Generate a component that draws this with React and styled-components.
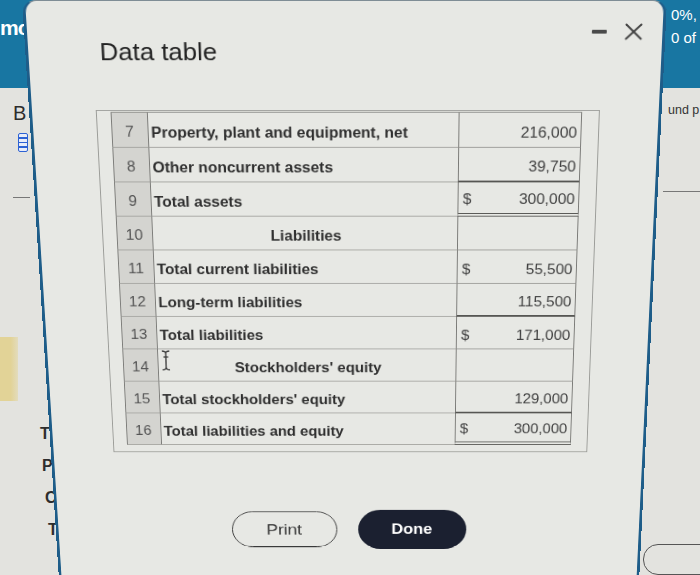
import React from 'react';
import styled, { createGlobalStyle } from 'styled-components';

const GlobalStyle = createGlobalStyle`
  html, body {
    margin: 0;
    padding: 0;
    width: 700px;
    height: 575px;
    overflow: hidden;
  }
  body {
    font-family: "Liberation Sans", Arial, sans-serif;
    background: #e2e2de;
  }
  #root {
    width: 700px;
    height: 575px;
  }
`;

const Screen = styled.div`
  position: relative;
  width: 700px;
  height: 575px;
  overflow: hidden;
  background: #e3e3df;
`;

/* page behind the modal */
const TopBar = styled.div`
  height: 88px;
  background: #1876a2;
  display: flex;
  justify-content: space-between;
  color: #ffffff;
`;

const TopLeftText = styled.div`
  font-size: 21px;
  font-weight: 700;
  padding-top: 16px;
  letter-spacing: -1px;
`;

const TopRightText = styled.div`
  width: 29px;
  padding-top: 3px;
  font-size: 15px;
  line-height: 23px;
  white-space: nowrap;
`;

const Lower = styled.div`
  display: flex;
  justify-content: space-between;
  height: 487px;
`;

const LeftRail = styled.div`
  width: 70px;
  display: flex;
  flex-direction: column;
  align-items: flex-start;
  color: #2d2d2d;
`;

const RailLetter = styled.div`
  font-size: ${p => p.size || 16}px;
  font-weight: ${p => (p.bold ? 700 : 400)};
  line-height: ${p => p.lh || 32}px;
  margin-left: ${p => p.indent}px;
  margin-top: ${p => p.top || 0}px;
`;

const BlueBadge = styled.div`
  width: 8px;
  height: 17px;
  margin: 9px 0 0 18px;
  border: 1.5px solid #2d62d4;
  border-radius: 2px;
  background: repeating-linear-gradient(#e8ecf8 0 3px, #2d62d4 3px 4.5px);
`;

const RailRule = styled.div`
  height: 1px;
  width: ${p => p.width}px;
  margin-left: ${p => p.indent}px;
  margin-top: ${p => p.top}px;
  background: #777;
`;

const YellowBlock = styled.div`
  width: 18px;
  height: 64px;
  margin-top: 139px;
  background: linear-gradient(90deg, #e2d397 60%, #e3dcbd);
`;

const RightRail = styled.div`
  width: 57px;
  display: flex;
  flex-direction: column;
  color: #333;
`;

const RightText = styled.div`
  padding-left: 25px;
  margin-top: 15px;
  font-size: 12.5px;
  white-space: nowrap;
`;

const GhostPill = styled.div`
  margin-top: 352px;
  width: 70px;
  height: 30px;
  border: 1px solid #555;
  border-radius: 15px;
`;

/* modal */
const Dialog = styled.div`
  position: absolute;
  left: 22px;
  top: 0;
  width: 645px;
  height: 690px;
  box-sizing: border-box;
  background: #e7e8e4;
  border: 3px solid #1e5d89;
  border-top: 1px solid #7d8b94;
  border-radius: 14px 14px 0 0;
  transform-origin: 368px 0;
  transform: perspective(1545px) rotateX(-15deg);
  display: flex;
  flex-direction: column;
`;

const Header = styled.div`
  height: 115px;
  box-sizing: border-box;
  display: flex;
  justify-content: space-between;
  align-items: flex-start;
  padding: 22px 20px 0 72px;
`;

const Title = styled.h2`
  margin: 16px 0 0;
  font-size: 26px;
  line-height: 30px;
  font-weight: 400;
  color: #232323;
`;

const Controls = styled.div`
  display: flex;
  align-items: center;
  gap: 18px;
  height: 20px;
`;

const MinimizeBar = styled.div`
  width: 15px;
  height: 4px;
  background: #4a4a4a;
  border-radius: 1px;
`;

const Frame = styled.div`
  margin-left: 65px;
  width: 514px;
  box-sizing: border-box;
  border: 1px solid #9b9c98;
  padding: 1px 17.5px 8px 13.5px;
`;

const Table = styled.div`
  display: flex;
  flex-direction: column;
  border-top: 1px solid #8e8e8a;
`;

const Row = styled.div`
  display: grid;
  grid-template-columns: 38px 317px 126px;
  height: 38px;
`;

const NumCell = styled.div`
  box-sizing: border-box;
  display: flex;
  align-items: flex-end;
  justify-content: center;
  padding-bottom: 7px;
  background: #d4d4d0;
  border-left: 1px solid #7d7d7a;
  border-right: 1px solid #7d7d7a;
  border-bottom: 1px solid #a3a39f;
  font-size: 16px;
  line-height: 18px;
  color: #555;
`;

const LabelCell = styled.div`
  position: relative;
  box-sizing: border-box;
  display: flex;
  align-items: flex-end;
  justify-content: ${p => (p.heading ? 'center' : 'flex-start')};
  padding: 0 0 6px 3px;
  border-bottom: 1px solid #a3a39f;
  font-size: 16px;
  line-height: 18px;
  font-weight: 700;
  color: #2f2f2f;
  white-space: nowrap;
`;

const underline = {
  thin: '1px solid #9a9a96',
  single: '2px solid #565653',
  double: '4px double #565653',
};

const ValueCell = styled.div`
  box-sizing: border-box;
  display: flex;
  align-items: flex-end;
  justify-content: space-between;
  padding: 0 3px 6px 5px;
  border-left: 1px solid #7a7a77;
  border-right: 1px solid #7a7a77;
  border-bottom: ${p => underline[p.line || 'thin']};
  font-size: 16px;
  line-height: 18px;
  color: #414141;
`;

const Cursor = styled.svg`
  position: absolute;
  left: 2px;
  top: 0;
`;

const ButtonRow = styled.div`
  display: flex;
  justify-content: center;
  align-items: center;
  gap: 23px;
  margin-top: 71px;
`;

const PillButton = styled.button`
  box-sizing: border-box;
  width: ${p => (p.primary ? 119 : 116)}px;
  height: ${p => (p.primary ? 49 : 45)}px;
  border-radius: 25px;
  border: ${p => (p.primary ? 'none' : '1.5px solid #3a3a3a')};
  background: ${p => (p.primary ? '#1b2030' : 'transparent')};
  color: ${p => (p.primary ? '#ffffff' : '#333333')};
  font-family: "Liberation Sans", Arial, sans-serif;
  font-size: ${p => (p.primary ? 18 : 19)}px;
  font-weight: ${p => (p.primary ? 700 : 400)};
  padding: 0;
`;

const rows = [
  { n: 7, label: 'Property, plant and equipment, net', value: '216,000' },
  { n: 8, label: 'Other noncurrent assets', value: '39,750', line: 'single' },
  { n: 9, label: 'Total assets', dollar: true, value: '300,000', line: 'double' },
  { n: 10, label: 'Liabilities', heading: true },
  { n: 11, label: 'Total current liabilities', dollar: true, value: '55,500' },
  { n: 12, label: 'Long-term liabilities', value: '115,500', line: 'single' },
  { n: 13, label: 'Total liabilities', dollar: true, value: '171,000' },
  { n: 14, label: "Stockholders' equity", heading: true, cursor: true },
  { n: 15, label: "Total stockholders' equity", value: '129,000', line: 'single' },
  { n: 16, label: 'Total liabilities and equity', dollar: true, value: '300,000', line: 'double' },
];

const TextCursor = () => (
  <Cursor width="12" height="26" viewBox="0 0 12 26" fill="none" stroke="#3a3a3a" strokeWidth="1.4">
    <path d="M2 2 Q6 2 6 5 Q6 2 10 2" />
    <path d="M6 5 V21" />
    <path d="M3.5 9 H8.5" />
    <path d="M2 24 Q6 24 6 21 Q6 24 10 24" />
  </Cursor>
);

export default function App() {
  return (
    <Screen>
      <GlobalStyle />
      <TopBar>
        <TopLeftText>mc</TopLeftText>
        <TopRightText>
          0%,
          <br />0 of
        </TopRightText>
      </TopBar>
      <Lower>
        <LeftRail>
          <RailLetter indent={13} top={14} size={20} lh={22}>B</RailLetter>
          <BlueBadge />
          <RailRule indent={13} top={45} width={17} />
          <YellowBlock />
          <RailLetter indent={40} top={17} bold>T</RailLetter>
          <RailLetter indent={42} bold>P</RailLetter>
          <RailLetter indent={45} bold>C</RailLetter>
          <RailLetter indent={48} bold>T</RailLetter>
        </LeftRail>
        <RightRail>
          <RightText>und p</RightText>
          <RailRule indent={20} top={74} width={40} />
          <GhostPill />
        </RightRail>
      </Lower>

      <Dialog>
        <Header>
          <Title>Data table</Title>
          <Controls>
            <MinimizeBar />
            <svg width="18" height="18" viewBox="0 0 18 18" stroke="#444" strokeWidth="2" strokeLinecap="round">
              <line x1="1.5" y1="1.5" x2="16.5" y2="16.5" />
              <line x1="16.5" y1="1.5" x2="1.5" y2="16.5" />
            </svg>
          </Controls>
        </Header>

        <Frame>
          <Table>
            {rows.map(r => (
              <Row key={r.n}>
                <NumCell>{r.n}</NumCell>
                <LabelCell heading={r.heading}>
                  {r.cursor && <TextCursor />}
                  {r.label}
                </LabelCell>
                <ValueCell line={r.line}>
                  <span>{r.dollar ? '$' : ''}</span>
                  <span>{r.value || ''}</span>
                </ValueCell>
              </Row>
            ))}
          </Table>
        </Frame>

        <ButtonRow>
          <PillButton>Print</PillButton>
          <PillButton primary>Done</PillButton>
        </ButtonRow>
      </Dialog>
    </Screen>
  );
}
